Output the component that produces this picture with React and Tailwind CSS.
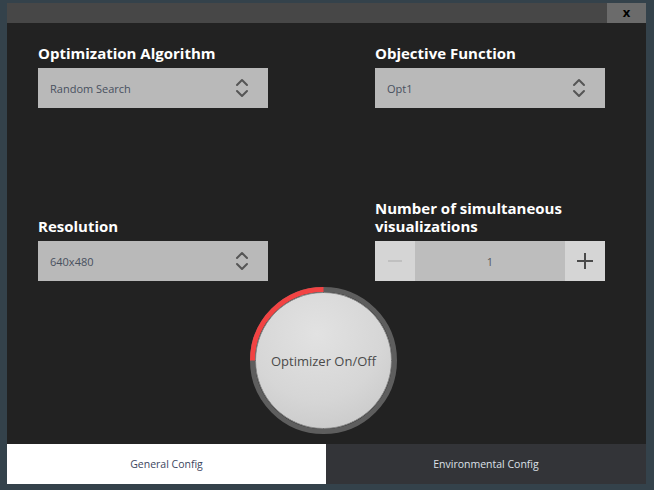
import React from 'react';

const font = { fontFamily: '"Open Sans", "DejaVu Sans", sans-serif' };

function UpDown() {
  return (
    <svg width="14" height="22" viewBox="0 0 14 22" fill="none" stroke="#555" strokeWidth="2" strokeLinecap="round" strokeLinejoin="round">
      <path d="M2 8 L7 3 L12 8" />
      <path d="M2 14 L7 19 L12 14" />
    </svg>
  );
}

function Select({ value }) {
  return (
    <div className="flex h-[40px] w-[230px] items-center justify-between bg-[#b9b9b9] pl-[12px] pr-[19px]">
      <span className="pt-[2px] text-[11px] text-[#48505e]">{value}</span>
      <UpDown />
    </div>
  );
}

function Label({ children }) {
  return <div className="text-[15px] font-bold leading-[18px] text-white">{children}</div>;
}

function Spin() {
  return (
    <div className="flex h-[40px] w-[230px]">
      <button className="flex w-[40px] items-center justify-center bg-[#d5d5d5]">
        <span className="block h-[2px] w-[14px] bg-[#c0c0c0]" />
      </button>
      <div className="flex flex-1 items-center justify-center bg-[#bdbdbd] pt-[2px] text-[11px] text-[#55595f]">1</div>
      <button className="flex w-[40px] items-center justify-center bg-[#d5d5d5]">
        <svg width="18" height="18" viewBox="0 0 18 18" stroke="#4a4a4a" strokeWidth="2">
          <path d="M9 1 V17 M1 9 H17" />
        </svg>
      </button>
    </div>
  );
}

export default function App() {
  return (
    <div className="h-[490px] w-[654px] bg-[#34424b] pb-[6px] pl-[7px] pr-[8px] pt-[3px]" style={font}>
      <div className="flex h-full flex-col bg-[#222222]">
        {/* title bar */}
        <div className="flex h-[20px] justify-end bg-[#474747]">
          <button className="flex w-[39px] items-center justify-center bg-[#6b6b6b] text-[13px] font-bold text-black">x</button>
        </div>

        <div className="flex flex-1 flex-col">
          <div className="grid grid-cols-[230px_230px] gap-x-[107px] gap-y-[91px] pl-[31px] pt-[21px]">
            <div className="flex flex-col gap-[6px]">
              <Label>Optimization Algorithm</Label>
              <Select value="Random Search" />
            </div>
            <div className="flex flex-col gap-[6px]">
              <Label>Objective Function</Label>
              <Select value="Opt1" />
            </div>
            <div className="flex flex-col justify-end gap-[6px]">
              <Label>Resolution</Label>
              <Select value="640x480" />
            </div>
            <div className="flex flex-col gap-[6px]">
              <Label>Number of simultaneous<br />visualizations</Label>
              <Spin />
            </div>
          </div>

          <div className="mt-[6px] flex justify-center pr-[6px]">
            <div className="relative h-[147px] w-[147px]">
              <svg className="absolute inset-0" width="147" height="147" viewBox="0 0 147 147" fill="none">
                <circle cx="73.5" cy="73.5" r="71" stroke="#5e5e5e" strokeWidth="5" />
                <path d="M2.5 73.5 A71 71 0 0 1 73.5 2.5" stroke="#f24343" strokeWidth="5" />
              </svg>
              <button className="absolute left-[5px] top-[5px] flex h-[137px] w-[137px] items-center justify-center rounded-full border border-[#8a8a8a] bg-[radial-gradient(circle_at_45%_30%,#e2e2e2_0%,#d6d6d6_55%,#c4c4c4_100%)] pt-[2px] text-[13px] text-[#4a4a4a]">
                Optimizer On/Off
              </button>
            </div>
          </div>
        </div>

        {/* tabs */}
        <div className="flex h-[40px]">
          <button className="flex w-[319px] items-center justify-center bg-white pt-[1px] text-[10.5px] text-[#3c4660]">General Config</button>
          <button className="flex flex-1 items-center justify-center bg-[#333438] pt-[1px] text-[10.5px] text-[#dde0e8]">Environmental Config</button>
        </div>
      </div>
    </div>
  );
}
